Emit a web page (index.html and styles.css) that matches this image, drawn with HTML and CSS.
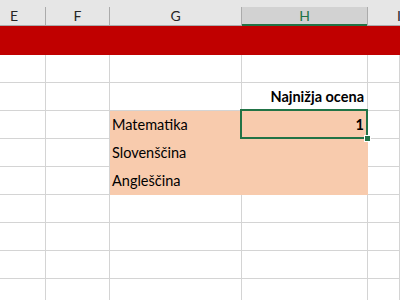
FILE: index.html
```html
<!DOCTYPE html>
<html lang="sl">
<head>
  <meta charset="UTF-8" />
  <title>Najnižja ocena</title>
  <link rel="stylesheet" href="styles.css">
</head>
<body>
  <div class="sheet">
    <div class="colhead">
      <div class="hc e">E</div>
      <div class="hc f">F</div>
      <div class="hc g">G</div>
      <div class="hc h active">H</div>
      <div class="hc i">I</div>
    </div>

    <div class="row band">
      <div class="c e"></div><div class="c f"></div><div class="c g"></div><div class="c h"></div><div class="c i"></div>
    </div>
    <div class="row">
      <div class="c e"></div><div class="c f"></div><div class="c g"></div><div class="c h"></div><div class="c i"></div>
    </div>
    <div class="row">
      <div class="c e"></div><div class="c f"></div><div class="c g"></div>
      <div class="c h num bold">Najnižja ocena</div>
      <div class="c i"></div>
    </div>
    <div class="row">
      <div class="c e"></div><div class="c f"></div>
      <div class="c g fill">Matematika</div>
      <div class="c h fill num bold selected">1<span class="handle"></span></div>
      <div class="c i"></div>
    </div>
    <div class="row">
      <div class="c e"></div><div class="c f"></div>
      <div class="c g fill">Slovenščina</div>
      <div class="c h fill"></div>
      <div class="c i"></div>
    </div>
    <div class="row">
      <div class="c e"></div><div class="c f"></div>
      <div class="c g fill">Angleščina</div>
      <div class="c h fill"></div>
      <div class="c i"></div>
    </div>
    <div class="row">
      <div class="c e"></div><div class="c f"></div><div class="c g"></div><div class="c h"></div><div class="c i"></div>
    </div>
    <div class="row">
      <div class="c e"></div><div class="c f"></div><div class="c g"></div><div class="c h"></div><div class="c i"></div>
    </div>
    <div class="row">
      <div class="c e"></div><div class="c f"></div><div class="c g"></div><div class="c h"></div><div class="c i"></div>
    </div>
    <div class="row">
      <div class="c e"></div><div class="c f"></div><div class="c g"></div><div class="c h"></div><div class="c i"></div>
    </div>
  </div>
</body>
</html>
```

FILE: styles.css
```css
body {
  margin: 0;
  background: #ffffff;
  font-family: Lato, "Liberation Sans", sans-serif;
  overflow: hidden;
}

.sheet {
  width: 400px;
  overflow: hidden;
}

/* column letters */
.colhead {
  display: flex;
  height: 26px;
  padding-top: 7px;
  box-sizing: border-box;
  background: #e6e6e6;
  border-bottom: 1px solid #ababab;
}

.hc {
  box-sizing: border-box;
  height: 18px;
  border-right: 1px solid #ababab;
  text-align: center;
  font-size: 14px;
  line-height: 18px;
  color: #262626;
  overflow: hidden;
}

.hc.e {
  text-align: left;
  padding-left: 10px;
}

.hc.i {
  border-right: none;
  text-align: left;
  padding-left: 29px;
}

.hc.active {
  background: #d2d2d2;
  color: #217346;
  box-shadow: inset 0 -2px 0 #217346;
  height: 19px;
  margin-bottom: -1px;
}

/* grid */
.row {
  display: flex;
  height: 28px;
}

.row.band {
  height: 29px;
  background: #c00000;
}

.c {
  box-sizing: border-box;
  height: 100%;
  border-right: 1px solid #d4d4d4;
  border-bottom: 1px solid #d4d4d4;
  display: flex;
  align-items: flex-end;
  padding: 0 2px 4px;
  font-size: 14.5px;
  line-height: 18px;
  color: #000000;
  white-space: nowrap;
}

.band .c {
  border-color: #c00000;
}

.e { width: 46px; flex: none; }
.f { width: 64px; flex: none; }
.g { width: 132px; flex: none; }
.h { width: 126px; flex: none; }
.i { flex: 1; min-width: 0; }

.num {
  justify-content: flex-end;
  padding-right: 3px;
}

.bold {
  font-weight: bold;
}

.fill {
  background: #f8cbad;
  border-color: #f8cbad;
}

.selected {
  position: relative;
}

.selected::before {
  content: "";
  position: absolute;
  left: -2px;
  top: -2px;
  right: -1px;
  bottom: -1px;
  border: 2px solid #217346;
}

.handle {
  position: absolute;
  right: -4px;
  bottom: -4px;
  width: 5px;
  height: 5px;
  background: #217346;
  border: 1px solid #ffffff;
}
```
